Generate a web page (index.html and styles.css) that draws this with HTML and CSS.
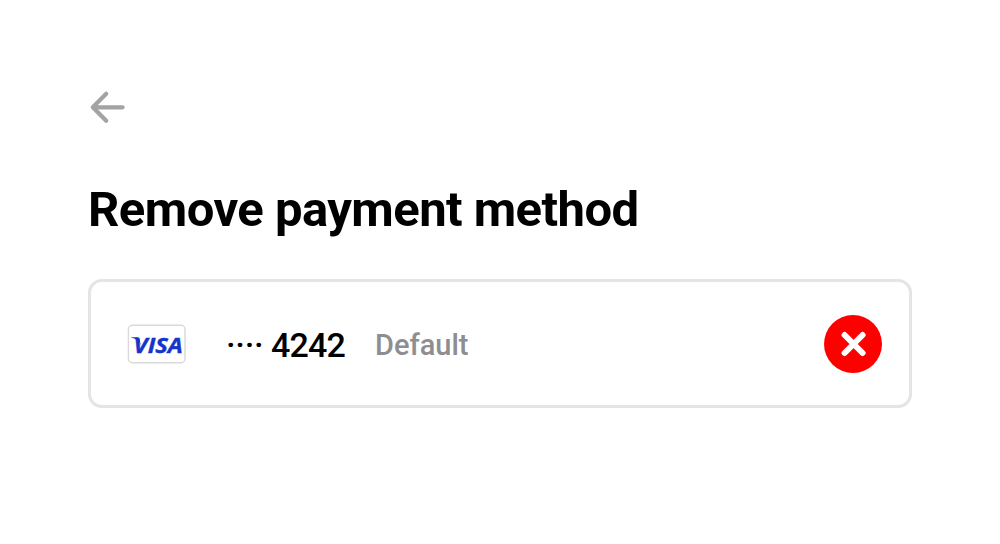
FILE: index.html
```html
<!DOCTYPE html>
<html lang="en">
<head>
<meta charset="utf-8">
<title>Remove payment method</title>
<link rel="stylesheet" href="styles.css">
</head>
<body>
<main class="page">
  <button class="back" aria-label="Back">
    <svg width="36" height="34" viewBox="0 0 36 34" fill="none" stroke="#a3a3a3" stroke-width="4.2" stroke-linecap="round" stroke-linejoin="round"><path d="M33.6 17.3H4M17.2 3.8L3.8 17.3L17.2 30.8"/></svg>
  </button>
  <h1 class="title">Remove payment method</h1>
  <section class="card">
    <svg class="brand" width="60" height="40" viewBox="0 0 60 40">
      <rect x="1.4" y="1.2" width="56.6" height="37.6" rx="4" fill="#fff" stroke="#d9d9d9" stroke-width="1.4"/>
      <path d="M4 13.2H10.4Q12.2 13.2 12.5 15L13.8 21.5Q11.2 15.2 4 13.6Z" fill="#1434cb"/>
      <text class="brand-text" x="6.6" y="28.6" textLength="49.2" lengthAdjust="spacingAndGlyphs">VISA</text>
    </svg>
    <span class="dots">····</span>
    <span class="digits">4242</span>
    <span class="default">Default</span>
    <button class="remove" aria-label="Remove card">
      <svg width="26" height="26" viewBox="0 0 26 26" stroke="#fff" stroke-width="6" stroke-linecap="round"><path d="M4.6 4L22.6 22M22.6 4L4.6 22"/></svg>
    </button>
  </section>
</main>
</body>
</html>
```
FILE: styles.css
```css
* { box-sizing: border-box; }
body {
  margin: 0;
  background: #fff;
  color: #000;
  font-family: Roboto, "Liberation Sans", sans-serif;
}
.page { padding: 90px 88px 0; }
button { border: 0; padding: 0; background: none; }
.back { display: block; width: 37px; height: 34px; margin-left: 1px; }
.back svg { display: block; }
.title {
  margin: 56px 0 0;
  font-size: 49px;
  line-height: 60px;
  font-weight: 700;
  letter-spacing: -0.55px;
  white-space: nowrap;
}
.card {
  display: flex;
  align-items: center;
  width: 824px;
  height: 129px;
  margin-top: 39px;
  padding: 0 27px 0 36px;
  border: 3px solid #e4e4e4;
  border-radius: 14px;
}
.brand { display: block; flex: none; }
.brand-text {
  font: italic 700 22px "Open Sans", "Noto Sans", sans-serif;
  fill: #1434cb;
  stroke: #1434cb;
  stroke-width: 0.4px;
}
.dots,
.digits {
  padding-top: 2px;
  font-size: 34px;
  font-weight: 500;
}
.dots { width: 45px; margin-left: 39px; letter-spacing: -0.3px; }
.digits { width: 74px; letter-spacing: -0.8px; }
.default {
  padding-top: 2px;
  margin-left: 30px;
  font-size: 29px;
  font-weight: 500;
  color: #8e8e91;
}
.remove {
  display: flex;
  align-items: center;
  justify-content: center;
  width: 58px;
  height: 58px;
  margin-left: auto;
  border-radius: 50%;
  background: #f00;
}
```
